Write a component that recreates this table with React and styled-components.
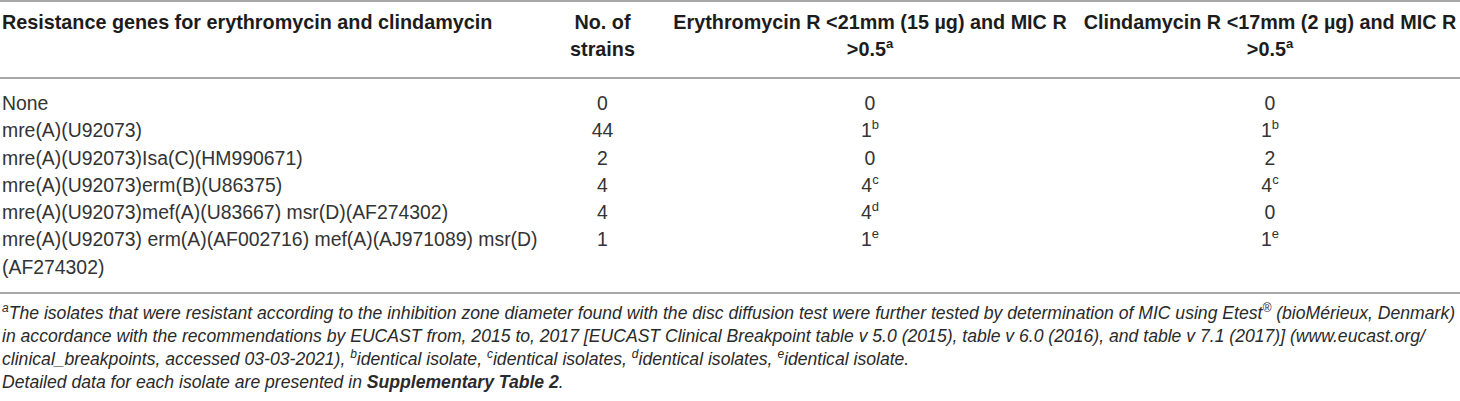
import React from "react";
import { createGlobalStyle, styled } from "styled-components";

const GlobalStyle = createGlobalStyle`
  * {
    margin: 0;
    padding: 0;
    box-sizing: border-box;
  }
  body {
    background: #fff;
    font-family: "Liberation Sans", Arial, sans-serif;
    color: #2a2a2a;
  }
`;

const Wrapper = styled.div`
  width: 1460px;
  height: 401px;
  overflow: hidden;
`;

const Table = styled.table`
  width: 1460px;
  border-collapse: collapse;
  table-layout: fixed;
  border-top: 2px solid #a8a8a8;
  border-bottom: 2px solid #a8a8a8;
`;

const HeadRow = styled.tr`
  border-bottom: 2px solid #a8a8a8;
`;

const HeadCell = styled.th`
  font-size: 19.8px;
  font-weight: 700;
  line-height: 27px;
  color: #1c1c1c;
  text-align: ${(p) => (p.$left ? "left" : "center")};
  vertical-align: top;
  white-space: nowrap;
  padding: 7px ${(p) => (p.$left ? "2px" : "0")} 14px;
`;

const Cell = styled.td`
  font-size: 19.4px;
  line-height: 27.3px;
  color: #333;
  text-align: ${(p) => (p.$left ? "left" : "center")};
  vertical-align: top;
  white-space: nowrap;
  padding: ${(p) => (p.$first ? "11px" : "0")} ${(p) => (p.$left ? "2px" : "0")}
    ${(p) => (p.$last ? "11px" : "0")};
`;

const Sup = styled.sup`
  font-size: 13px;
  line-height: 0;
  vertical-align: 8px;
`;

const Notes = styled.div`
  padding: 8px 2px 0;
  font-size: 17.6px;
  line-height: 23px;
  font-style: italic;
  color: #2a2a2a;
  white-space: nowrap;
`;

const NoteSup = styled.sup`
  font-size: 12px;
  line-height: 0;
  vertical-align: 7px;
`;

const Strong = styled.b`
  font-weight: 700;
`;

const rows = [
  ["None", "0", ["0"], ["0"]],
  ["mre(A)(U92073)", "44", ["1", "b"], ["1", "b"]],
  ["mre(A)(U92073)Isa(C)(HM990671)", "2", ["0"], ["2"]],
  ["mre(A)(U92073)erm(B)(U86375)", "4", ["4", "c"], ["4", "c"]],
  ["mre(A)(U92073)mef(A)(U83667) msr(D)(AF274302)", "4", ["4", "d"], ["0"]],
  [
    ["mre(A)(U92073) erm(A)(AF002716) mef(A)(AJ971089) msr(D)", "(AF274302)"],
    "1",
    ["1", "e"],
    ["1", "e"],
  ],
];

function Value({ v }) {
  return (
    <>
      {v[0]}
      {v[1] && <Sup>{v[1]}</Sup>}
    </>
  );
}

export default function App() {
  return (
    <>
      <GlobalStyle />
      <Wrapper>
        <Table>
          <colgroup>
            <col style={{ width: 545 }} />
            <col style={{ width: 115 }} />
            <col style={{ width: 420 }} />
            <col style={{ width: 380 }} />
          </colgroup>
          <thead>
            <HeadRow>
              <HeadCell $left>Resistance genes for erythromycin and clindamycin</HeadCell>
              <HeadCell>
                No. of
                <br />
                strains
              </HeadCell>
              <HeadCell>
                Erythromycin R &lt;21mm (15 µg) and MIC R
                <br />
                &gt;0.5<Sup>a</Sup>
              </HeadCell>
              <HeadCell>
                Clindamycin R &lt;17mm (2 µg) and MIC R
                <br />
                &gt;0.5<Sup>a</Sup>
              </HeadCell>
            </HeadRow>
          </thead>
          <tbody>
            {rows.map((r, i) => {
              const first = i === 0;
              const last = i === rows.length - 1;
              return (
                <tr key={i}>
                  <Cell $left $first={first} $last={last}>
                    {Array.isArray(r[0]) ? (
                      <>
                        {r[0][0]}
                        <br />
                        {r[0][1]}
                      </>
                    ) : (
                      r[0]
                    )}
                  </Cell>
                  <Cell $first={first} $last={last}>
                    {r[1]}
                  </Cell>
                  <Cell $first={first} $last={last}>
                    <Value v={r[2]} />
                  </Cell>
                  <Cell $first={first} $last={last}>
                    <Value v={r[3]} />
                  </Cell>
                </tr>
              );
            })}
          </tbody>
        </Table>
        <Notes>
          <NoteSup>a</NoteSup>The isolates that were resistant according to the inhibition zone diameter found with the disc
          diffusion test were further tested by determination of MIC using Etest<NoteSup>®</NoteSup> (bioMérieux, Denmark)
          <br />
          in accordance with the recommendations by EUCAST from, 2015 to, 2017 [EUCAST Clinical Breakpoint table v 5.0
          (2015), table v 6.0 (2016), and table v 7.1 (2017)] (www.eucast.org/
          <br />
          clinical_breakpoints, accessed 03-03-2021), <NoteSup>b</NoteSup>identical isolate, <NoteSup>c</NoteSup>identical
          isolates, <NoteSup>d</NoteSup>identical isolates, <NoteSup>e</NoteSup>identical isolate.
          <br />
          Detailed data for each isolate are presented in <Strong>Supplementary Table 2</Strong>.
        </Notes>
      </Wrapper>
    </>
  );
}
